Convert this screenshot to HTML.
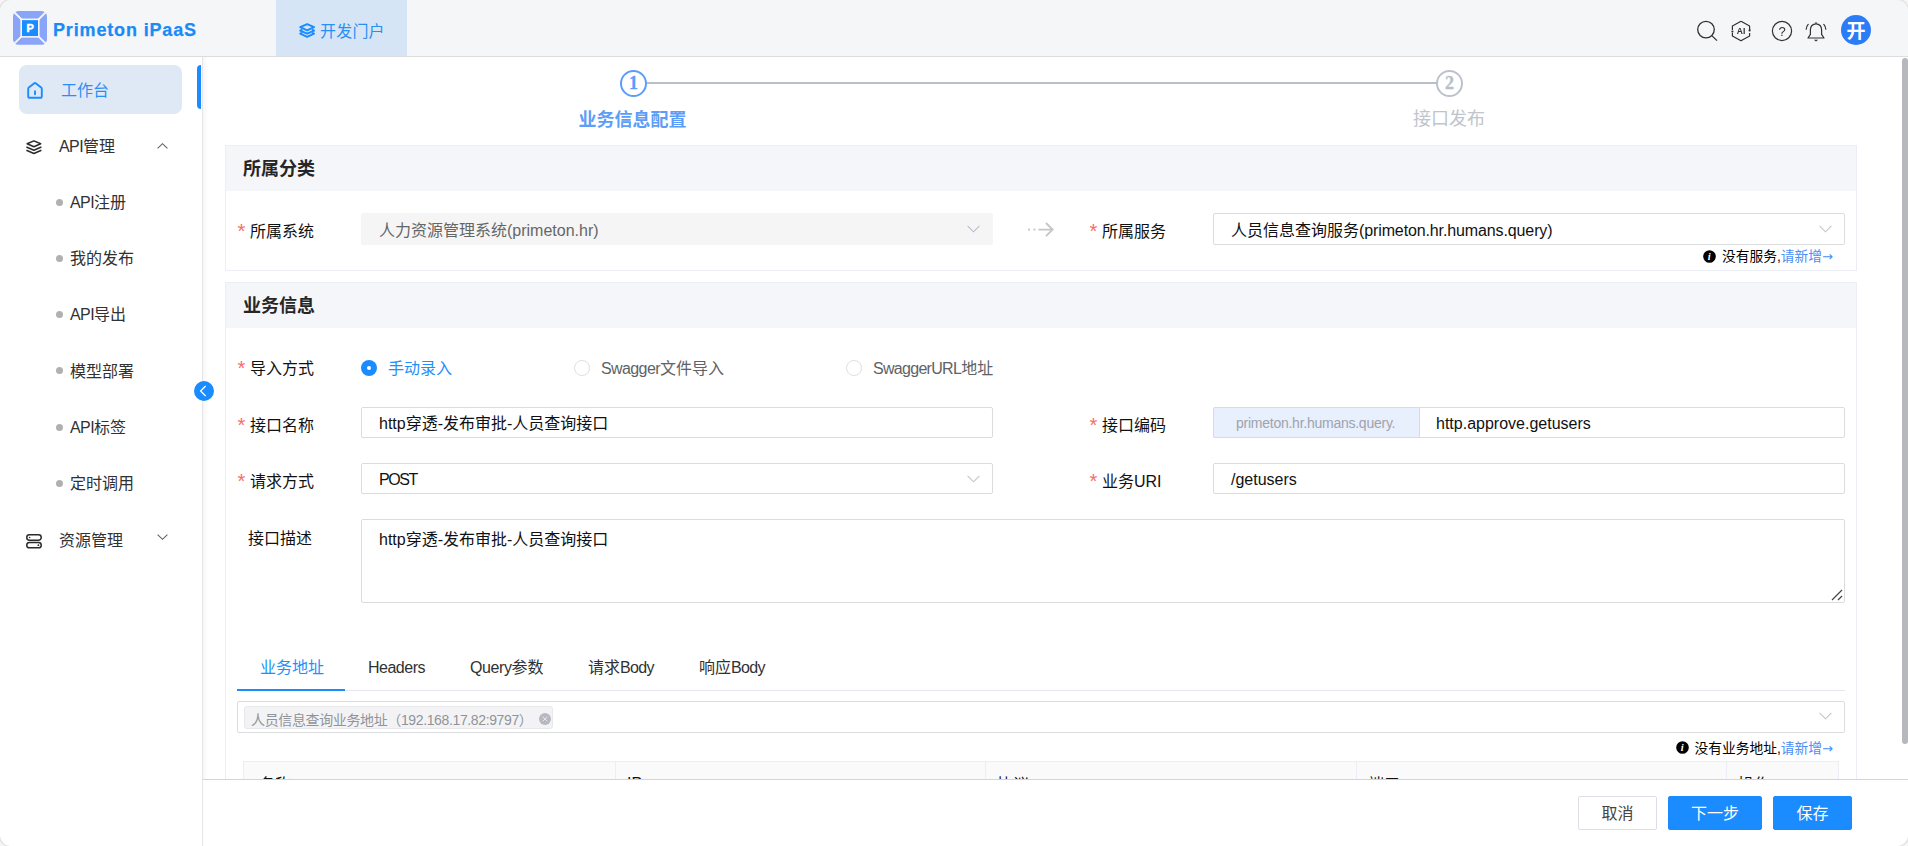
<!DOCTYPE html>
<html lang="zh-CN">
<head>
<meta charset="utf-8">
<title>Primeton iPaaS</title>
<style>
*{box-sizing:border-box;margin:0;padding:0}
html,body{width:1908px;height:846px;overflow:hidden;background:#fff}
body{font-family:"Liberation Sans","Noto Sans CJK SC",sans-serif;font-size:16px;color:#1f1f1f;position:relative}
div,span{white-space:nowrap}
.a{position:absolute}
svg{position:absolute;overflow:visible}
/* header */
#hdr{position:absolute;left:0;top:0;width:1908px;height:57px;background:#f5f6f8;border-bottom:1px solid #dcdcdc;z-index:5}
#brand{position:absolute;left:53px;top:18px;font-size:18px;font-weight:bold;color:#1a8bf5;line-height:24px;letter-spacing:.85px;-webkit-text-stroke:.25px #1a8bf5}
#tab{position:absolute;left:276px;top:0;width:131px;height:56px;background:#d6e5f6}
#tab span{position:absolute;left:44px;top:20px;font-size:16px;line-height:24px;color:#2a8ff5;letter-spacing:.2px}
/* sidebar */
#side{position:absolute;left:0;top:57px;width:203px;height:789px;background:#fff;border-right:1px solid #e6e6e6;z-index:3}
#sideshadow{position:absolute;left:203px;top:57px;width:5px;height:789px;background:linear-gradient(90deg,#f6f6f6,#fff);z-index:3}
.mi{position:absolute;font-size:16px;line-height:24px;color:#303133}
.dot{position:absolute;left:56px;width:7px;height:7px;border-radius:50%;background:#b0b0b0}
/* content */
#main{position:absolute;left:0;top:0;width:1908px;height:779px;overflow:hidden;background:#fff}
.card{position:absolute;left:225px;width:1632px;border:1px solid #ebeef5;background:#fff}
.card .ch{height:45px;background:#f5f6fa}
.ct{position:absolute;left:243px;font-size:18px;font-weight:bold;line-height:24px;color:#262626}
.lbl{position:absolute;font-size:16px;line-height:24px;color:#111}
.star{position:absolute;font-size:20px;line-height:24px;color:#f56c6c;font-family:"Liberation Sans",sans-serif;margin-left:-.5px;margin-top:-2px}
.ar{font-family:"DejaVu Sans",sans-serif;font-size:13px;line-height:0;position:relative;top:-.5px}
.l1{letter-spacing:-.6px}
.inp{position:absolute;border:1px solid #dbdcdd;border-radius:2px;background:#fff}
.tx{position:absolute;font-size:16px;line-height:24px;color:#111}
/* footer */
#foot{position:absolute;left:203px;top:779px;width:1705px;height:67px;background:#fff;border-top:1px solid #d4d4d4;z-index:4}
.btn{position:absolute;top:16px;height:34px;font-size:16px;line-height:33px;text-align:center;border:1px solid #dcdfe6;border-radius:2px;color:#444;background:#fff}
.btn.p{background:#1a8cff;border-color:#1a8cff;color:#fff}
#sb{position:absolute;left:1902px;top:58px;width:6px;height:686px;background:#b7b8bd;border-radius:3px;z-index:6}
#frame{position:absolute;left:0;top:0;width:1908px;height:846px;border-radius:11px;box-shadow:0 0 0 1.5px #e4e4e4,0 0 0 14px #f6f6f6;z-index:20;pointer-events:none}
</style>
</head>
<body>
<div id="main">
<!-- steps -->
<div class="a" style="left:647px;top:82px;width:790px;height:2px;background:#b9c0cc"></div>
<div class="a" style="left:620px;top:70px;width:27px;height:27px;border:2px solid #5c9df8;border-radius:50%;background:#fff"></div>
<div class="a" style="left:620px;top:70px;width:27px;height:27px;text-align:center;font:bold 18px/26px 'Liberation Serif',serif;color:#5c9df8;-webkit-text-stroke:.3px #5c9df8">1</div>
<div class="a" style="left:1436px;top:70px;width:27px;height:27px;border:2px solid #bcc2cd;border-radius:50%;background:#fff"></div>
<div class="a" style="left:1436px;top:70px;width:27px;height:27px;text-align:center;font:bold 18px/26px 'Liberation Serif',serif;color:#b9bfca;-webkit-text-stroke:.4px #b9bfca">2</div>
<div class="a" style="left:532.500px;top:108px;width:200px;text-align:center;font-size:18px;font-weight:bold;line-height:24px;color:#5c9df8">业务信息配置</div>
<div class="a" style="left:1349px;top:107px;width:200px;text-align:center;font-size:18px;line-height:24px;color:#c0c4cc">接口发布</div>

<!-- card 1 -->
<div class="card" style="top:145px;height:126px"><div class="ch"></div></div>
<div class="ct" style="top:157px">所属分类</div>
<div class="star" style="left:238px;top:221px">*</div>
<div class="lbl" style="left:250px;top:220px">所属系统</div>
<div class="inp" style="left:361px;top:213px;width:632px;height:32px;background:#f5f5f5;border-color:#f5f5f5"></div>
<div class="tx" style="left:379px;top:219px;color:#666">人力资源管理系统(primeton.hr)</div>
<svg style="left:966.6px;top:225.3px" width="13" height="8" viewBox="0 0 13 8"><path d="M.6.8 6.5 6.8 12.4.8" fill="none" stroke="#b4bccc" stroke-width="1.050"/></svg>
<svg style="left:1027px;top:222px" width="28" height="16" viewBox="0 0 28 16"><g fill="none" stroke="#c6c6c6" stroke-width="1.900"><path d="M11.500 7.600H25.500M19 1l6.600 6.600L19 14.200"/></g><rect x="1" y="6.6" width="2" height="2" fill="#c8c8c8"/><rect x="6.4" y="6.6" width="2" height="2" fill="#c8c8c8"/></svg>
<div class="star" style="left:1090px;top:221px">*</div>
<div class="lbl" style="left:1102px;top:220px">所属服务</div>
<div class="inp" style="left:1213px;top:213px;width:632px;height:32px"></div>
<div class="tx" style="left:1231px;top:219px">人员信息查询服务<span style="letter-spacing:-.12px">(primeton.hr.humans.query)</span></div>
<svg style="left:1818.6px;top:225.3px" width="13" height="8" viewBox="0 0 13 8"><path d="M.6.8 6.5 6.8 12.4.8" fill="none" stroke="#c0c4cc" stroke-width="1.050"/></svg>
<svg style="left:1702.700px;top:249.700px" width="13" height="13" viewBox="0 0 13 13"><circle cx="6.5" cy="6.5" r="6.3" fill="#000"/><text x="6.3" y="10.3" text-anchor="middle" font-family="Liberation Serif,serif" font-style="italic" font-weight="bold" font-size="10.5" fill="#fff">i</text></svg>
<div class="a" style="right:75px;top:247px;font-size:13.750px;line-height:20px;color:#000">没有服务,<span style="color:#4a8ef7">请新增<span class="ar">→</span></span></div>

<!-- card 2 -->
<div class="card" style="top:282px;height:600px"><div class="ch"></div></div>
<div class="ct" style="top:294px">业务信息</div>

<div class="star" style="left:238px;top:358px">*</div>
<div class="lbl" style="left:250px;top:357px">导入方式</div>
<div class="a" style="left:361px;top:360px;width:16px;height:16px;border-radius:50%;background:#1a8cff"></div>
<div class="a" style="left:366.600px;top:365.600px;width:4.400px;height:4.400px;border-radius:50%;background:#fff"></div>
<div class="tx" style="left:388px;top:357px;color:#1f8ffa">手动录入</div>
<div class="a" style="left:574px;top:360px;width:16px;height:16px;border-radius:50%;background:#fff;border:1px solid #dcdfe6"></div>
<div class="tx" style="left:601px;top:357px;color:#606266"><span class="l1">Swagger</span>文件导入</div>
<div class="a" style="left:846px;top:360px;width:16px;height:16px;border-radius:50%;background:#fff;border:1px solid #dcdfe6"></div>
<div class="tx" style="left:873px;top:357px;color:#606266"><span style="letter-spacing:-.7px">SwaggerURL</span>地址</div>

<div class="star" style="left:238px;top:415px">*</div>
<div class="lbl" style="left:250px;top:414px">接口名称</div>
<div class="inp" style="left:361px;top:407px;width:632px;height:31px"></div>
<div class="tx" style="left:379px;top:412px">http穿透-发布审批-人员查询接口</div>
<div class="star" style="left:1090px;top:415px">*</div>
<div class="lbl" style="left:1102px;top:414px">接口编码</div>
<div class="inp" style="left:1213px;top:407px;width:632px;height:31px"></div>
<div class="a" style="left:1213px;top:407px;width:207px;height:31px;border:1px solid #d6dbe6;border-radius:2px 0 0 2px;background:#e8effd"></div>
<div class="a" style="left:1236px;top:411px;font-size:14px;line-height:24px;color:#9fa3ad;letter-spacing:-.25px">primeton.hr.humans.query.</div>
<div class="tx" style="left:1436px;top:412px">http.approve.getusers</div>

<div class="star" style="left:238px;top:471px">*</div>
<div class="lbl" style="left:250px;top:470px">请求方式</div>
<div class="inp" style="left:361px;top:463px;width:632px;height:31px"></div>
<div class="tx" style="left:379px;top:468px;letter-spacing:-1.4px">POST</div>
<svg style="left:966.6px;top:475.3px" width="13" height="8" viewBox="0 0 13 8"><path d="M.6.8 6.5 6.8 12.4.8" fill="none" stroke="#c0c4cc" stroke-width="1.050"/></svg>
<div class="star" style="left:1090px;top:471px">*</div>
<div class="lbl" style="left:1102px;top:470px">业务URI</div>
<div class="inp" style="left:1213px;top:463px;width:632px;height:31px"></div>
<div class="tx" style="left:1231px;top:468px">/getusers</div>

<div class="lbl" style="left:248px;top:527px">接口描述</div>
<div class="inp" style="left:361px;top:519px;width:1484px;height:84px"></div>
<div class="tx" style="left:379px;top:528px">http穿透-发布审批-人员查询接口</div>
<svg style="left:1830.500px;top:589px" width="12" height="12" viewBox="0 0 12 12"><path d="M1 11 11 1M7 11l4-4" stroke="#444" stroke-width="1.2" fill="none"/></svg>

<!-- tabs -->
<div class="a" style="left:237px;top:690px;width:1608px;height:1px;background:#e4e7ed"></div>
<div class="a" style="left:237px;top:689px;width:108px;height:2px;background:#1a8cff"></div>
<div class="tx" style="left:260px;top:656px;color:#1f8ffa">业务地址</div>
<div class="tx" style="left:368px;top:656px;color:#303133"><span style="letter-spacing:-.5px">Headers</span></div>
<div class="tx" style="left:470px;top:656px;color:#303133"><span style="letter-spacing:-.4px">Query</span>参数</div>
<div class="tx" style="left:588px;top:656px;color:#303133">请求<span style="letter-spacing:-.7px">Body</span></div>
<div class="tx" style="left:699px;top:656px;color:#303133">响应<span style="letter-spacing:-.7px">Body</span></div>

<div class="inp" style="left:237px;top:701px;width:1608px;height:32px"></div>
<div class="a" style="left:244px;top:706px;width:309px;height:23px;background:#f3f3f5;border:1px solid #e8e8eb;border-radius:3px"></div>
<div class="a" style="left:251px;top:708px;font-size:14px;line-height:24px;color:#909399;letter-spacing:-.37px">人员信息查询业务地址（192.168.17.82:9797）</div>
<svg style="left:538.800px;top:712.500px" width="12" height="12" viewBox="0 0 12 12"><circle cx="6" cy="6" r="6" fill="#b6b9c0"/><path d="M3.8 3.8l4.4 4.4M8.2 3.8 3.8 8.2" stroke="#e6e7ea" stroke-width="1"/></svg>
<svg style="left:1818.6px;top:712.3px" width="13" height="8" viewBox="0 0 13 8"><path d="M.6.8 6.5 6.8 12.4.8" fill="none" stroke="#c0c4cc" stroke-width="1.050"/></svg>
<svg style="left:1675.700px;top:741.300px" width="13" height="13" viewBox="0 0 13 13"><circle cx="6.5" cy="6.5" r="6.3" fill="#000"/><text x="6.3" y="10.3" text-anchor="middle" font-family="Liberation Serif,serif" font-style="italic" font-weight="bold" font-size="10.5" fill="#fff">i</text></svg>
<div class="a" style="right:75px;top:739px;font-size:13.750px;line-height:20px;color:#000">没有业务地址,<span style="color:#4a8ef7">请新增<span class="ar">→</span></span></div>

<!-- table header -->
<div class="a" style="left:243px;top:761px;width:1596px;height:46px;background:#fafafa;border:1px solid #ebeef5"></div>
<div class="a" style="left:615px;top:762px;width:1px;height:45px;background:#ebeef5"></div>
<div class="a" style="left:985px;top:762px;width:1px;height:45px;background:#ebeef5"></div>
<div class="a" style="left:1356px;top:762px;width:1px;height:45px;background:#ebeef5"></div>
<div class="a" style="left:1726px;top:762px;width:1px;height:45px;background:#ebeef5"></div>
<div class="tx" style="left:259px;top:773px;color:#111">名称</div>
<div class="tx" style="left:627px;top:772px;color:#111">IP</div>
<div class="tx" style="left:997px;top:773px;color:#111">协议</div>
<div class="tx" style="left:1368px;top:773px;color:#111">端口</div>
<div class="tx" style="left:1738px;top:773px;color:#111">操作</div>
</div>

<!-- header -->
<div id="hdr">
  <svg style="left:13px;top:10.800px" width="34" height="33.800" viewBox="0 0 34 34" preserveAspectRatio="none">
    <rect x="0" y="0" width="34" height="34" rx="5.500" fill="#8aa5f8"/>
    <path d="M0 0 34 34M34 0 0 34" stroke="#f5f6f8" stroke-width="1.8"/>
    <rect x="8.2" y="8.4" width="17.6" height="17.6" fill="#1a8cff" stroke="#f5f6f8" stroke-width="1.6"/>
    <text x="17.200" y="21.300" text-anchor="middle" font-family="Liberation Sans,sans-serif" font-weight="bold" font-size="11" fill="#fff" stroke="#fff" stroke-width=".5">P</text>
  </svg>
  <div id="brand">Primeton iPaaS</div>
  <div id="tab">
    <svg style="left:23px;top:22.700px" width="16.300" height="14.800" viewBox="0 0 16.300 14.800"><g fill="none" stroke="#1a8cff" stroke-width="1.900" stroke-linejoin="round" stroke-linecap="round"><path d="M8.150 1.100 15.100 4.200 8.150 7.300 1.200 4.200z"/><path d="M2.600 6.900 1.200 7.600 8.150 10.700 15.100 7.600 13.700 6.900"/><path d="M2.600 10 1.200 10.700 8.150 13.800 15.100 10.700 13.700 10"/></g></svg>
    <span>开发门户</span>
  </div>
  <!-- search -->
  <svg style="left:1696px;top:20px" width="22" height="22" viewBox="0 0 22 22"><g fill="none" stroke="#303133" stroke-width="1.3"><circle cx="10" cy="9.6" r="8.3"/><path d="M15.8 15.6 21 20.6"/></g></svg>
  <!-- AI -->
  <svg style="left:1730px;top:20px;will-change:transform" width="22" height="22" viewBox="0 0 22 22"><g fill="none" stroke="#303133" stroke-width="1.2" stroke-linejoin="round"><path d="M11 1.2 19.6 6v4M19.6 13v3L11 20.8 2.4 16v-3M2.4 10V6L11 1.2"/></g><circle cx="2.4" cy="11.6" r="1.1" fill="#303133"/><circle cx="19.6" cy="10.4" r="1.1" fill="#303133"/><text x="11" y="14.2" text-anchor="middle" font-family="Liberation Sans,sans-serif" font-weight="bold" font-size="8.5" fill="#303133">AI</text></svg>
  <!-- help -->
  <svg style="left:1771px;top:20px;will-change:transform" width="22" height="22" viewBox="0 0 22 22"><circle cx="11" cy="11" r="9.6" fill="none" stroke="#303133" stroke-width="1.2"/><text x="11" y="16" text-anchor="middle" font-family="Liberation Sans,sans-serif" font-size="13" fill="#303133">?</text></svg>
  <!-- bell -->
  <svg style="left:1805px;top:21px" width="22" height="22" viewBox="0 0 22 22"><g fill="none" stroke="#303133" stroke-width="1.2" stroke-linecap="round" stroke-linejoin="round"><path d="M11 1.6v1.2M11 2.8c-3.4 0-5.6 2.6-5.6 6v4.6L3 17h16l-2.4-3.6V8.8c0-3.4-2.2-6-5.600-6z"/><path d="M3.200 3.400C1.900 4.900 1.300 6.500 1.200 8.200M18.800 3.400c1.300 1.500 1.900 3.100 2 4.800"/></g><path d="M8.800 18.800h4.400L11 20.400z" fill="#303133"/></svg>
  <!-- avatar -->
  <div class="a" style="left:1841px;top:15px;width:30px;height:30px;border-radius:50%;background:#2b7cf7"></div>
  <div class="a" style="left:1841px;top:15px;width:30px;height:30px;text-align:center;font-size:19px;line-height:33.500px;font-weight:bold;color:#fff">开</div>
</div>

<!-- sidebar -->
<div id="side">
  <div class="a" style="left:19px;top:8px;width:163px;height:49px;border-radius:8px;background:#dfe9f5"></div>
  <div class="a" style="left:197px;top:8px;width:4px;height:44px;border-radius:4px 0 0 4px;background:#1a8cff"></div>
  <svg style="left:27px;top:25px" width="16" height="17" viewBox="0 0 16 17"><g fill="none" stroke="#1a8cff" stroke-width="1.900" stroke-linejoin="round" stroke-linecap="round"><path d="M1.200 6.800a1.600 1.600 0 0 1 .6-1.250L7 1.400a1.600 1.600 0 0 1 2 0l5.200 4.150a1.600 1.600 0 0 1 .6 1.250v7.400a1.600 1.600 0 0 1-1.600 1.600H2.800a1.600 1.600 0 0 1-1.600-1.600z"/><path d="M8 9.300v2.900"/></g></svg>
  <div class="mi" style="left:61px;top:22px;color:#2a8ff5">工作台</div>

  <svg style="left:25.900px;top:83.100px" width="16" height="14" viewBox="0 0 16 14"><g fill="none" stroke="#2b2b2d" stroke-width="1.500" stroke-linejoin="round"><path d="M7.900.9 14.700 3.800 7.900 6.700 1.100 3.800z"/><path d="M.4 7 7.900 10.200l7.500-3.200"/><path d="M.4 10.300 7.900 13.500l7.500-3.200"/></g></svg>
  <div class="mi" style="left:59px;top:78px"><span class="l1">API</span>管理</div>
  <svg style="left:157px;top:86px" width="11" height="6" viewBox="0 0 11 6"><path d="M.6 5.400 5.500.7l4.900 4.700" fill="none" stroke="#606266" stroke-width="1.100"/></svg>

  <div class="dot" style="top:142px"></div><div class="mi" style="left:70px;top:134px"><span class="l1">API</span>注册</div>
  <div class="dot" style="top:198px"></div><div class="mi" style="left:70px;top:190px">我的发布</div>
  <div class="dot" style="top:254px"></div><div class="mi" style="left:70px;top:246px"><span class="l1">API</span>导出</div>
  <div class="dot" style="top:310px"></div><div class="mi" style="left:70px;top:303px">模型部署</div>
  <div class="dot" style="top:367px"></div><div class="mi" style="left:70px;top:359px"><span class="l1">API</span>标签</div>
  <div class="dot" style="top:423px"></div><div class="mi" style="left:70px;top:415px">定时调用</div>

  <svg style="left:25.900px;top:476.900px" width="16" height="14.600" viewBox="0 0 16 14.600"><g fill="none" stroke="#2b2b2d" stroke-width="1.500"><rect x=".75" y=".75" width="14.500" height="5.400" rx="2.700"/><rect x=".75" y="8.450" width="14.500" height="5.400" rx="2.700"/></g><circle cx="3.600" cy="3.450" r=".8" fill="#2b2b2d"/><circle cx="12.400" cy="11.150" r=".9" fill="#2b2b2d"/></svg>
  <div class="mi" style="left:59px;top:472px">资源管理</div>
  <svg style="left:157px;top:477px" width="11" height="6" viewBox="0 0 11 6"><path d="M.6.600 5.500 5.300 10.400.6" fill="none" stroke="#606266" stroke-width="1.100"/></svg>
</div>
<div id="sideshadow"></div>
<div class="a" style="left:194px;top:381px;width:20px;height:20px;border-radius:50%;background:#1a8cff;z-index:7"></div>
<svg style="left:199px;top:385px;z-index:8" width="8" height="12" viewBox="0 0 8 12"><path d="M6.600 1 1.600 6l5 5" fill="none" stroke="#fff" stroke-width="1.300"/></svg>

<div id="sb"></div>
<div id="frame"></div>
<div id="foot">
  <div class="btn" style="left:1375px;width:79px">取消</div>
  <div class="btn p" style="left:1465px;width:94px">下一步</div>
  <div class="btn p" style="left:1570px;width:79px">保存</div>
</div>

</body>
</html>
